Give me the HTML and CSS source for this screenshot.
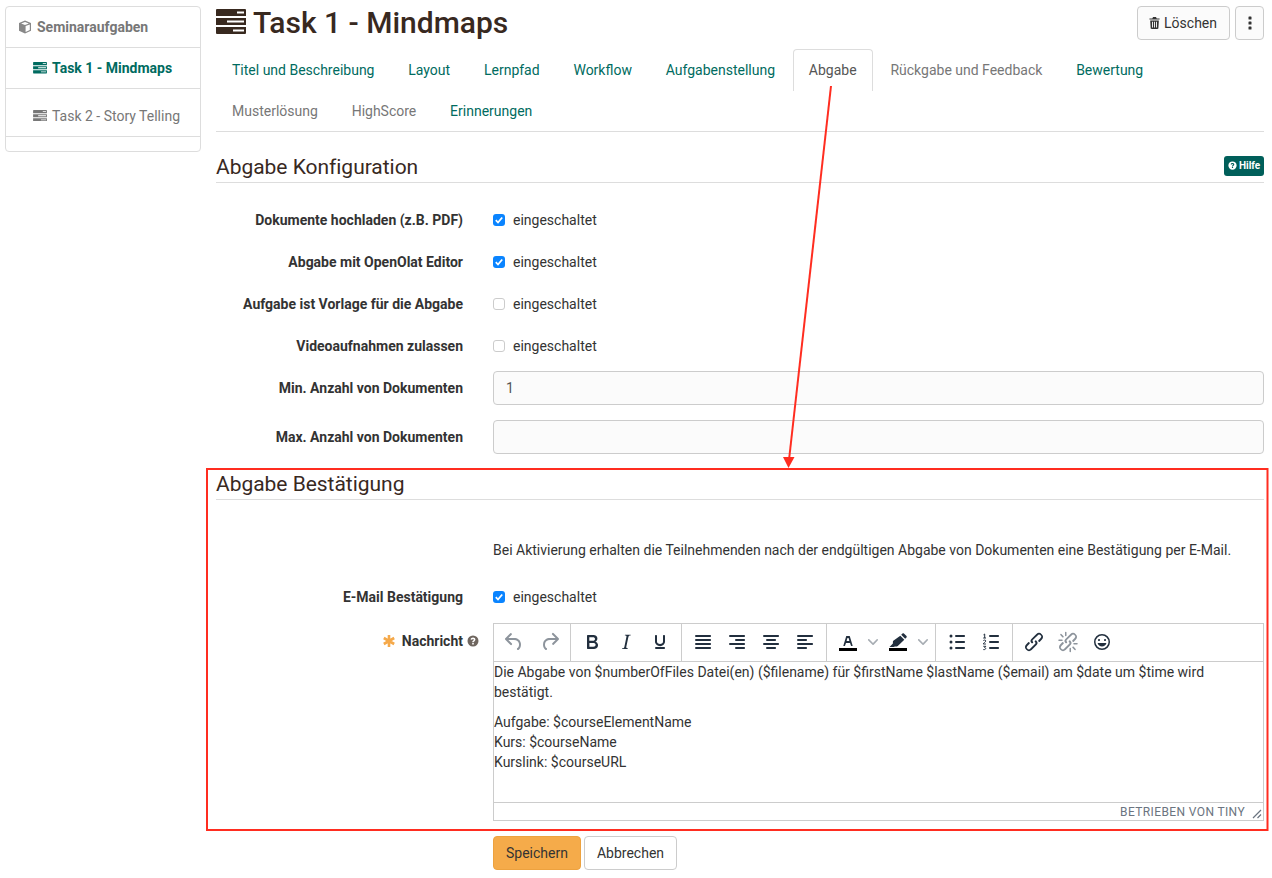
FILE: index.html
```html
<!DOCTYPE html>
<html lang="de">
<head>
<meta charset="utf-8">
<title>Task 1 - Mindmaps</title>
<link rel="stylesheet" href="styles.css">
</head>
<body>
<div class="page">
  <nav class="sidebar">
    <div class="side-row side-root">
      <svg class="cube" viewBox="0 0 14 14"><path d="M7 .6 1 2.900v7.900l6 2.600 6-2.600V2.900L7 .6Zm0 1.300 3.900 1.500L7 4.900 3.100 3.400 7 1.900ZM7.600 12V6l4.200-1.600v5.700L7.600 12Z"/></svg>
      <span>Seminaraufgaben</span>
    </div>
    <div class="side-row side-active">
      <svg class="task-icon small" viewBox="0 0 30 25"><use href="#tasks"/></svg>
      <span>Task 1 - Mindmaps</span>
    </div>
    <div class="side-row side-muted">
      <svg class="task-icon small" viewBox="0 0 30 25"><use href="#tasks"/></svg>
      <span>Task 2 - Story Telling</span>
    </div>
    <div class="side-end"></div>
  </nav>

  <main class="main">
    <header class="head">
      <h1 class="title">
        <svg class="task-icon big" viewBox="0 0 30 25">
          <defs>
            <path id="tasks" fill-rule="evenodd" d="M1 0h28a1 1 0 0 1 1 1v6H0V1a1 1 0 0 1 1-1Zm20 2.500v2h7v-2h-7ZM0 9h30v7H0V9Zm11 2.500v2h17v-2H11ZM0 18h30v6a1 1 0 0 1-1 1H1a1 1 0 0 1-1-1v-6Zm17 2.500v2h11v-2H17Z"/>
          </defs>
          <use href="#tasks"/>
        </svg>
        <span>Task 1 - Mindmaps</span>
      </h1>
      <div class="head-actions">
        <button class="btn btn-delete">
          <svg class="trash" viewBox="0 0 12 14"><path d="M4.400.5h3.200l.8 1.500H11.500v1.300H.5V2h3.100L4.400.500ZM1.300 4.200h9.400l-.5 8.300c0 .6-.5 1-1 1H2.800c-.5 0-1-.4-1-1L1.300 4.200Zm2 1.400v6.300h1V5.600h-1Zm2.200 0v6.300h1V5.600h-1Zm2.200 0v6.300h1V5.600h-1Z"/></svg>
          Löschen
        </button>
        <button class="btn btn-more" aria-label="Mehr">
          <svg class="kebab" viewBox="0 0 4 14"><rect x=".5" y=".5" width="3" height="3" rx=".6"/><rect x=".5" y="5.500" width="3" height="3" rx=".6"/><rect x=".5" y="10.500" width="3" height="3" rx=".6"/></svg>
        </button>
      </div>
    </header>

    <ul class="tabs">
      <li class="tab">Titel und Beschreibung</li>
      <li class="tab">Layout</li>
      <li class="tab">Lernpfad</li>
      <li class="tab">Workflow</li>
      <li class="tab">Aufgabenstellung</li>
      <li class="tab tab-active">Abgabe</li>
      <li class="tab tab-muted">Rückgabe und Feedback</li>
      <li class="tab">Bewertung</li>
      <li class="tab tab-muted">Musterlösung</li>
      <li class="tab tab-muted">HighScore</li>
      <li class="tab">Erinnerungen</li>
    </ul>

    <section class="section section-first">
      <div class="section-head">
        <h3 class="section-title">Abgabe Konfiguration</h3>
        <span class="help-badge">
          <svg class="help-icon" viewBox="0 0 12 12"><path fill-rule="evenodd" d="M6 .5a5.500 5.500 0 1 1 0 11 5.500 5.500 0 0 1 0-11Zm-.8 7.400v1.500h1.600V7.900H5.200ZM6 2.600c-1.300 0-2.200.7-2.400 1.900l1.500.3c.1-.5.400-.8.900-.8s.8.300.8.700c0 .4-.3.600-.7.900-.5.400-.9.800-.9 1.500v.2h1.500c0-.4.200-.6.600-.9.600-.4 1.100-.9 1.100-1.800 0-1.200-1-2-2.400-2Z"/></svg>
          Hilfe
        </span>
      </div>
      <div class="checks">
        <div class="row">
          <label class="label">Dokumente hochladen (z.B. PDF)</label>
          <div class="field"><span class="check on"><svg viewBox="0 0 12 12"><path d="M2.800 6.200 5 8.500l4.200-5"/></svg></span>eingeschaltet</div>
        </div>
        <div class="row">
          <label class="label">Abgabe mit OpenOlat Editor</label>
          <div class="field"><span class="check on"><svg viewBox="0 0 12 12"><path d="M2.800 6.200 5 8.500l4.200-5"/></svg></span>eingeschaltet</div>
        </div>
        <div class="row">
          <label class="label">Aufgabe ist Vorlage für die Abgabe</label>
          <div class="field"><span class="check"></span>eingeschaltet</div>
        </div>
        <div class="row">
          <label class="label">Videoaufnahmen zulassen</label>
          <div class="field"><span class="check"></span>eingeschaltet</div>
        </div>
      </div>
      <div class="row row-input">
        <label class="label">Min. Anzahl von Dokumenten</label>
        <div class="field"><input class="input" type="text" value="1"></div>
      </div>
      <div class="row row-input">
        <label class="label">Max. Anzahl von Dokumenten</label>
        <div class="field"><input class="input" type="text" value=""></div>
      </div>
    </section>

    <section class="section">
      <div class="section-head">
        <h3 class="section-title">Abgabe Bestätigung</h3>
      </div>
      <div class="row row-info">
        <div class="label"></div>
        <div class="field">Bei Aktivierung erhalten die Teilnehmenden nach der endgültigen Abgabe von Dokumenten eine Bestätigung per E-Mail.</div>
      </div>
      <div class="row row-mail">
        <label class="label">E-Mail Bestätigung</label>
        <div class="field"><span class="check on"><svg viewBox="0 0 12 12"><path d="M2.800 6.200 5 8.500l4.200-5"/></svg></span>eingeschaltet</div>
      </div>
      <div class="row row-editor">
        <label class="label label-editor">
          <svg class="asterisk" viewBox="0 0 14 14"><path d="M7 1v12M1.800 4l10.400 6M12.200 4 1.800 10"/></svg>
          <span>Nachricht</span>
          <svg class="question" viewBox="0 0 12 12"><path fill-rule="evenodd" d="M6 .5a5.500 5.500 0 1 1 0 11 5.500 5.500 0 0 1 0-11Zm-.8 7.400v1.500h1.600V7.900H5.200ZM6 2.600c-1.300 0-2.200.7-2.400 1.900l1.500.3c.1-.5.400-.8.900-.8s.8.300.8.700c0 .4-.3.600-.7.900-.5.400-.9.800-.9 1.500v.2h1.500c0-.4.200-.6.600-.9.600-.4 1.100-.9 1.100-1.800 0-1.200-1-2-2.400-2Z"/></svg>
        </label>
        <div class="field field-block">
          <div class="editor">
            <div class="toolbar">
              <div class="tgroup tgroup-history">
                <span class="tbtn off"><svg viewBox="0 0 24 24"><path d="M6.400 8H12c3.700 0 6.200 2 6.800 5.100.6 2.700-.4 5.600-2.300 6.800a1 1 0 0 1-1-1.800c1.100-.6 1.800-2.700 1.400-4.600-.5-2.100-2.100-3.500-4.900-3.500H6.400l3.300 3.300a1 1 0 1 1-1.400 1.400l-5-5a1 1 0 0 1 0-1.400l5-5a1 1 0 0 1 1.400 1.400L6.400 8Z"/></svg></span>
                <span class="tbtn off"><svg viewBox="0 0 24 24"><path d="M17.600 10H12c-2.800 0-4.400 1.400-4.900 3.500-.4 2 .3 4 1.400 4.600a1 1 0 1 1-1 1.800c-2-1.200-2.900-4.100-2.300-6.800.6-3 3-5.100 6.800-5.100h5.600l-3.300-3.300a1 1 0 1 1 1.400-1.400l5 5a1 1 0 0 1 0 1.400l-5 5a1 1 0 0 1-1.400-1.400l3.300-3.300Z"/></svg></span>
              </div>
              <div class="tgroup">
                <span class="tbtn"><svg viewBox="0 0 24 24"><path d="M7.800 19c-.3 0-.5 0-.6-.2l-.2-.5V5.700c0-.2 0-.4.200-.5l.6-.2h5c1.500 0 2.700.3 3.500 1 .7.600 1.100 1.400 1.100 2.500a3 3 0 0 1-.6 1.900c-.4.600-1 1-1.600 1.200.4.100.9.300 1.300.6s.8.700 1 1.200c.4.400.5 1 .5 1.600 0 1.300-.4 2.300-1.300 3-.8.700-2.100 1-3.800 1H7.800Zm5-8.300c.6 0 1.200-.1 1.600-.5.400-.3.600-.7.600-1.300 0-1.100-.8-1.700-2.300-1.700H9.300v3.500h3.500Zm.5 6c.7 0 1.300-.1 1.700-.4.400-.4.600-.9.600-1.500s-.2-1-.7-1.400c-.4-.3-1-.4-2-.4H9.400v3.700h3.900Z"/></svg></span>
                <span class="tbtn"><svg viewBox="0 0 24 24"><path d="m16.700 4.700-.1.900h-.3c-.6 0-1 0-1.400.3-.3.300-.4.600-.5 1.100l-2.100 9.800v.6c0 .5.400.8 1.400.8h.2l-.2.800H8l.2-.8h.2c1.100 0 1.800-.5 2-1.500l2-9.800.1-.5c0-.6-.4-.8-1.400-.8h-.3l.2-.9h5.700Z"/></svg></span>
                <span class="tbtn"><svg viewBox="0 0 24 24"><path d="M16 5c.6 0 1 .4 1 1v5.500a4 4 0 0 1-.4 1.800l-1 1.400a5.300 5.300 0 0 1-5.500 1 5 5 0 0 1-1.600-1c-.5-.4-.8-.9-1.100-1.400a4 4 0 0 1-.4-1.800V6c0-.6.4-1 1-1s1 .4 1 1v5.500c0 .3 0 .6.200 1l.6.7a3.300 3.300 0 0 0 2.200.8 3.400 3.400 0 0 0 2.200-.8c.3-.2.4-.5.600-.8l.2-.9V6c0-.6.4-1 1-1ZM8 17h8c.6 0 1 .4 1 1s-.4 1-1 1H8a1 1 0 0 1 0-2Z"/></svg></span>
              </div>
              <div class="tgroup">
                <span class="tbtn"><svg viewBox="0 0 24 24"><path d="M5 5h14c.6 0 1 .4 1 1s-.4 1-1 1H5a1 1 0 1 1 0-2Zm0 4h14c.6 0 1 .4 1 1s-.4 1-1 1H5a1 1 0 1 1 0-2Zm0 4h14c.6 0 1 .4 1 1s-.4 1-1 1H5a1 1 0 0 1 0-2Zm0 4h14c.6 0 1 .4 1 1s-.4 1-1 1H5a1 1 0 0 1 0-2Z"/></svg></span>
                <span class="tbtn"><svg viewBox="0 0 24 24"><path d="M5 5h14c.6 0 1 .4 1 1s-.4 1-1 1H5a1 1 0 1 1 0-2Zm6 4h8c.6 0 1 .4 1 1s-.4 1-1 1h-8a1 1 0 0 1 0-2Zm0 8h8c.6 0 1 .4 1 1s-.4 1-1 1h-8a1 1 0 0 1 0-2Zm-6-4h14c.6 0 1 .4 1 1s-.4 1-1 1H5a1 1 0 0 1 0-2Z"/></svg></span>
                <span class="tbtn"><svg viewBox="0 0 24 24"><path d="M5 5h14c.6 0 1 .4 1 1s-.4 1-1 1H5a1 1 0 1 1 0-2Zm3 4h8c.6 0 1 .4 1 1s-.4 1-1 1H8a1 1 0 1 1 0-2Zm0 8h8c.6 0 1 .4 1 1s-.4 1-1 1H8a1 1 0 0 1 0-2Zm-3-4h14c.6 0 1 .4 1 1s-.4 1-1 1H5a1 1 0 0 1 0-2Z"/></svg></span>
                <span class="tbtn"><svg viewBox="0 0 24 24"><path d="M5 5h14c.6 0 1 .4 1 1s-.4 1-1 1H5a1 1 0 1 1 0-2Zm0 4h8c.6 0 1 .4 1 1s-.4 1-1 1H5a1 1 0 1 1 0-2Zm0 8h8c.6 0 1 .4 1 1s-.4 1-1 1H5a1 1 0 0 1 0-2Zm0-4h14c.6 0 1 .4 1 1s-.4 1-1 1H5a1 1 0 0 1 0-2Z"/></svg></span>
              </div>
              <div class="tgroup">
                <span class="tbtn"><svg viewBox="0 0 24 24"><path class="swatch" d="M3 18h18v3H3z"/><path d="M8.700 16h-.8a.5.5 0 0 1-.5-.6l2.700-9c.1-.3.3-.4.5-.4h2.800c.2 0 .4.100.5.400l2.700 9a.5.5 0 0 1-.5.600h-.8a.5.5 0 0 1-.4-.4l-.7-2.200c0-.2-.3-.4-.5-.4h-3.400c-.2 0-.4.200-.5.400l-.7 2.200c0 .2-.2.400-.4.400Zm2.600-7.600-.6 2a.5.5 0 0 0 .5.600h1.600a.5.5 0 0 0 .5-.6l-.6-2c0-.2-.3-.4-.5-.4h-.4c-.2 0-.4.200-.5.400Z"/></svg></span>
                <span class="tchev"><svg viewBox="0 0 10 10"><path d="M8.700 2.200c.3-.3.800-.3 1 0 .4.400.4.900 0 1.200L5.700 7.800c-.3.300-.9.300-1.200 0L.2 3.400a.8.800 0 0 1 0-1.200c.3-.3.800-.3 1.100 0L5 6l3.700-3.800Z"/></svg></span>
                <span class="tbtn"><svg viewBox="0 0 24 24"><path class="swatch" d="M3 18h18v3H3z"/><path d="M16.500 3.500c.4-.4 1-.4 1.400 0l2.600 2.600c.4.400.4 1 0 1.400l-1.300 1.300-4-4 1.300-1.300ZM14.300 5.700l4 4-6.500 6.300c-.3.300-.7.400-1.100.4H9L7.500 17H3.500l3.400-3.400v-1.800c0-.4.100-.8.400-1.100l7-5Z"/></svg></span>
                <span class="tchev"><svg viewBox="0 0 10 10"><path d="M8.700 2.200c.3-.3.800-.3 1 0 .4.400.4.900 0 1.200L5.700 7.800c-.3.300-.9.300-1.200 0L.2 3.400a.8.800 0 0 1 0-1.200c.3-.3.800-.3 1.100 0L5 6l3.700-3.800Z"/></svg></span>
              </div>
              <div class="tgroup">
                <span class="tbtn"><svg viewBox="0 0 24 24"><path d="M11 5h8c.6 0 1 .4 1 1s-.4 1-1 1h-8a1 1 0 0 1 0-2Zm0 6h8c.6 0 1 .4 1 1s-.4 1-1 1h-8a1 1 0 0 1 0-2Zm0 6h8c.6 0 1 .4 1 1s-.4 1-1 1h-8a1 1 0 0 1 0-2Z"/><circle cx="6" cy="6" r="1.500"/><circle cx="6" cy="12" r="1.500"/><circle cx="6" cy="18" r="1.500"/></svg></span>
                <span class="tbtn"><svg viewBox="0 0 24 24"><path d="M11 5h8c.6 0 1 .4 1 1s-.4 1-1 1h-8a1 1 0 0 1 0-2Zm0 6h8c.6 0 1 .4 1 1s-.4 1-1 1h-8a1 1 0 0 1 0-2Zm0 6h8c.6 0 1 .4 1 1s-.4 1-1 1h-8a1 1 0 0 1 0-2Z"/><path class="numerals" d="M4.500 4.800 5.700 4v4M4.200 8h2.800M4.300 10.700c.4-.9 2.500-.9 2.500.3 0 1-2.500 1.800-2.500 3h2.600M4.300 16.300h2.500l-1.200 1.300c1.500 0 1.700 2.400-1.300 2"/></svg></span>
              </div>
              <div class="tgroup tgroup-last">
                <span class="tbtn"><svg viewBox="0 0 24 24"><path d="M6.200 12.300a1 1 0 0 1 1.400 1.400l-2 2a2 2 0 1 0 2.800 2.800l4.800-4.800a1 1 0 0 0 0-1.400 1 1 0 1 1 1.400-1.300 2.900 2.900 0 0 1 0 4L9.600 20a3.900 3.900 0 0 1-5.500-5.500l2.100-2.200Zm11.600-.6a1 1 0 0 1-1.400-1.400l2-2a2 2 0 1 0-2.800-2.800L10.800 10a1 1 0 0 0 0 1.400A1 1 0 1 1 9.400 13a2.900 2.900 0 0 1 0-4L14.400 4a3.900 3.900 0 0 1 5.500 5.500l-2.100 2.200Z"/></svg></span>
                <span class="tbtn off"><svg viewBox="0 0 24 24"><path d="M6.200 12.300a1 1 0 0 1 1.400 1.400l-2 2a2 2 0 1 0 2.800 2.800l4.800-4.800a1 1 0 0 0 0-1.400 1 1 0 1 1 1.400-1.300 2.900 2.900 0 0 1 0 4L9.600 20a3.900 3.900 0 0 1-5.500-5.500l2.100-2.200Zm11.600-.6a1 1 0 0 1-1.400-1.400l2-2a2 2 0 1 0-2.800-2.800L10.800 10a1 1 0 0 0 0 1.400A1 1 0 1 1 9.400 13a2.900 2.900 0 0 1 0-4L14.400 4a3.900 3.900 0 0 1 5.500 5.500l-2.100 2.200ZM7.600 6.300a.8.800 0 0 1-1.100 1.100L4.300 5a.8.800 0 0 1 1.100-1.100l2.200 2.400ZM10.500 2.500v3a.75.75 0 1 1-1.500 0v-3a.75.75 0 1 1 1.500 0ZM3 9.500h3a.75.75 0 1 1 0 1.500H3a.75.75 0 1 1 0-1.500ZM16.400 17.700a.8.800 0 0 1 1.100-1.100l2.200 2.400a.8.800 0 0 1-1.100 1.100l-2.200-2.400ZM13.500 21.500v-3a.75.75 0 1 1 1.500 0v3a.75.75 0 1 1-1.500 0ZM21 14.500h-3a.75.75 0 1 1 0-1.500h3a.75.75 0 1 1 0 1.500Z"/></svg></span>
                <span class="tbtn"><svg viewBox="0 0 24 24"><path d="M9 11c.6 0 1-.4 1-1s-.4-1-1-1a1 1 0 0 0-1 1c0 .6.400 1 1 1Zm6 0c.6 0 1-.4 1-1s-.4-1-1-1a1 1 0 0 0-1 1c0 .6.400 1 1 1Zm-3 5.500c2.100 0 4-1.500 4.400-3.500H7.600c.5 2 2.300 3.500 4.400 3.500ZM12 4a8 8 0 1 0 0 16 8 8 0 0 0 0-16Zm0 14.500a6.500 6.500 0 1 1 0-13 6.500 6.500 0 0 1 0 13Z"/></svg></span>
              </div>
            </div>
            <div class="editor-body">
              <p>Die Abgabe von $numberOfFiles Datei(en) ($filename) für $firstName $lastName ($email) am $date um $time wird bestätigt.</p>
              <p>Aufgabe: $courseElementName<br>Kurs: $courseName<br>Kurslink: $courseURL</p>
            </div>
            <div class="statusbar">
              <span class="powered">BETRIEBEN VON TINY</span>
              <svg class="resize" viewBox="0 0 10 10"><path d="M9 1 1 9M9 5.500 5.500 9"/></svg>
            </div>
          </div>
        </div>
      </div>
      <div class="row row-actions">
        <div class="label"></div>
        <div class="field actions">
          <button class="btn btn-primary">Speichern</button>
          <button class="btn btn-cancel">Abbrechen</button>
        </div>
      </div>
    </section>
  </main>
</div>

<svg class="annotation" viewBox="0 0 1272 878" aria-hidden="true">
  <rect class="anno-box" x="207" y="469" width="1060.500" height="361"/>
  <path class="anno-line" d="M831 86 789 460"/>
  <path class="anno-head" d="M783 457h11.500L788.500 468Z"/>
</svg>
</body>
</html>
```

FILE: styles.css
```css
* { box-sizing: border-box; }
html, body { margin: 0; padding: 0; background: #fff; }
body {
  font-family: Roboto, "Liberation Sans", sans-serif;
  font-size: 14px;
  line-height: 20px;
  color: #333;
  width: 1272px;
  height: 878px;
  overflow: hidden;
  position: relative;
}
.page { display: flex; align-items: flex-start; padding-left: 5px; }

/* Sidebar */
.sidebar {
  width: 196px;
  margin-top: 6px;
  border: 1px solid #ddd;
  border-radius: 4px;
  flex: none;
}
.side-row {
  display: flex;
  align-items: center;
  border-bottom: 1px solid #ddd;
  color: #777;
}
.side-root { height: 41px; padding-left: 12px; font-weight: 700; gap: 5px; }
.side-active { height: 41px; padding-left: 27px; font-weight: 700; color: #006b60; gap: 5px; }
.side-muted { height: 48px; padding-left: 27px; padding-top: 6px; gap: 5px; }
.side-end { height: 14px; }
.cube { width: 14px; height: 14px; fill: #888; }
.task-icon { fill: currentColor; flex: none; }
.task-icon.small { width: 14px; height: 11.500px; }
.task-icon.big { width: 30px; height: 25px; margin-top: -3px; }

/* Main */
.main { width: 1048px; margin-left: 15px; flex: none; }
.head { display: flex; justify-content: space-between; height: 49px; }
.title {
  display: flex;
  align-items: center;
  gap: 7px;
  margin: 0;
  height: 46px;
  font-size: 30px;
  line-height: 46px;
  font-weight: 500;
  color: #38291f;
}
.head-actions { display: flex; gap: 5px; padding-top: 6px; align-items: flex-start; }
.btn {
  font: inherit;
  color: #333;
  height: 34px;
  border: 1px solid #ccc;
  border-radius: 4px;
  background: #fff;
  display: inline-flex;
  align-items: center;
  justify-content: center;
  padding: 0 12px;
}
.btn-delete { width: 93px; gap: 4px; background: #fbfbfb; }
.btn-more { width: 29px; padding: 0; background: #fbfbfb; }
.trash { width: 12px; height: 14px; fill: #333; margin-left: -1px; }
.kebab { width: 4px; height: 14px; fill: #333; }

/* Tabs */
.tabs {
  display: flex;
  flex-wrap: wrap;
  list-style: none;
  margin: 0;
  padding: 0;
  border-bottom: 1px solid #ddd;
  height: 83px;
}
.tab {
  height: 42px;
  padding: 11px 16px 10px;
  margin-right: 1.800px;
  color: #006b60;
  white-space: nowrap;
}
.tab:nth-child(9) { margin-top: -1px; }
.tab:nth-child(10) { margin-top: -1px; }
.tab:nth-child(11) { margin-top: -1px; }
.tab-muted { color: #777; }
.tab-active {
  color: #555;
  padding: 10px 15px;
  border: 1px solid #ddd;
  border-bottom: 0;
  border-radius: 4px 4px 0 0;
}

/* Sections */
.section-first { padding-top: 20px; }
.section-head {
  display: flex;
  align-items: center;
  justify-content: space-between;
  height: 31px;
  border-bottom: 1px solid #ddd;
}
.section-title {
  margin: 0;
  font-size: 21px;
  line-height: 30px;
  font-weight: 400;
  letter-spacing: -.03px;
  color: #38291f;
}
.help-badge {
  display: inline-flex;
  align-items: center;
  gap: 2px;
  height: 20px;
  width: 40px;
  padding-left: 4px;
  margin-top: -3px;
  background: #005f5a;
  color: #fff;
  border-radius: 3px;
  font-size: 10px;
  font-weight: 700;
}
.help-icon { width: 9px; height: 9px; fill: #fff; }

.row { display: flex; align-items: center; }
.label {
  width: 247px;
  margin-right: 30px;
  flex: none;
  text-align: right;
  font-weight: 700;
  color: #333;
}
.field { flex: 1; display: flex; align-items: center; color: #333; }
.field-block { display: block; }
.checks { display: flex; flex-direction: column; gap: 22px; padding-top: 27px; margin-bottom: 15px; }
.check {
  width: 12px;
  height: 12px;
  margin-right: 8px;
  border: 1px solid #ccc;
  border-radius: 3px;
  background: #fff;
  flex: none;
  display: block;
}
.check svg { display: block; width: 12px; height: 12px; fill: none; stroke: #fff; stroke-width: 1.800; }
.check.on { background: #0a84ff; border: 0; }
.row-input { margin-bottom: 15px; }
.input {
  width: 100%;
  height: 34px;
  padding: 0 12px;
  font: inherit;
  color: #555;
  background: #fbfbfb;
  border: 1px solid #ccc;
  border-radius: 4px;
}
.row-info { margin-top: 40px; }
.row-mail { margin-top: 27px; margin-bottom: 16px; }
.row-editor { align-items: flex-start; margin-bottom: 15px; }
.label-editor {
  display: flex;
  align-items: center;
  justify-content: flex-end;
  padding-top: 8px;
  margin-right: 14px;
  width: 263px;
}
.asterisk { width: 14px; height: 14px; fill: none; stroke: #f5a94a; stroke-width: 2.600; margin-right: 6px; }
.question { width: 12px; height: 12px; fill: #6f665f; margin-left: 4px; }

/* Editor */
.editor { border: 1px solid #ccc; height: 198px; display: flex; flex-direction: column; }
.toolbar { display: flex; height: 38px; border-bottom: 1px solid #ccc; flex: none; }
.tgroup {
  display: flex;
  align-items: flex-start;
  padding: 1px 4px 0;
  border-right: 1px solid #ccc;
}
.tgroup-history { padding: 1px 3px 0; gap: 2px; }
.tgroup-last { border-right: 0; }
.tbtn { width: 34px; height: 34px; display: flex; align-items: center; justify-content: center; }
.tbtn svg { width: 24px; height: 24px; fill: #222f3e; }
.tbtn .swatch { fill: #000; }
.tbtn .numerals { fill: none; stroke: #222f3e; stroke-width: 1; }
.tbtn.off svg { fill: #8d949c; }
.tchev { width: 16px; height: 34px; display: flex; align-items: center; justify-content: center; }
.tchev svg { width: 10px; height: 10px; fill: #a7adb3; }
.editor-body { flex: 1; overflow: hidden; color: #333; }
.editor-body p { margin: 0 0 10px; }
.statusbar {
  height: 18px;
  flex: none;
  border-top: 1px solid #ccc;
  display: flex;
  align-items: center;
  justify-content: flex-end;
  font-size: 12px;
  color: #6b7480;
}
.powered { margin-right: 7px; letter-spacing: .38px; }
.resize { width: 10px; height: 10px; margin-right: 1px; margin-top: 4px; fill: none; stroke: #6b7480; stroke-width: 1.200; }

/* Actions */
.actions { gap: 3px; }
.btn-primary { width: 88px; background: #f5ab4a; border-color: #eda23f; color: #333; }
.btn-cancel { width: 93px; }

/* Annotation */
.annotation { position: absolute; left: 0; top: 0; width: 1272px; height: 878px; pointer-events: none; }
.anno-box { fill: none; stroke: #ff2d20; stroke-width: 2; }
.anno-line { fill: none; stroke: #ff2d20; stroke-width: 2; }
.anno-head { fill: #ff2d20; }
```
